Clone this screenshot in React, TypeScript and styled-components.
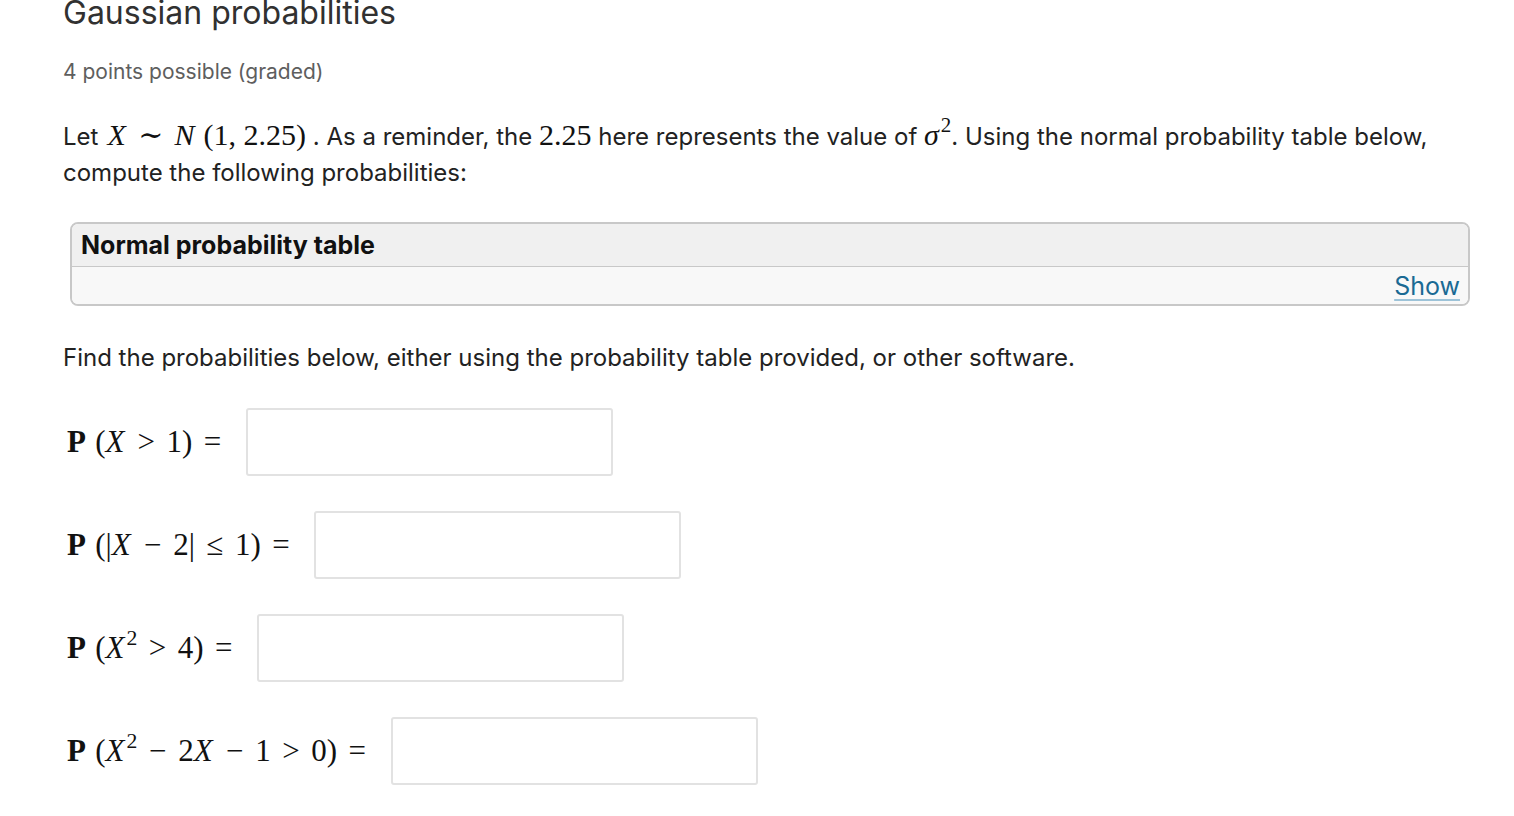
import React from 'react'
import styled, { createGlobalStyle } from 'styled-components'

const GlobalStyle = createGlobalStyle`
  html, body {
    margin: 0;
    padding: 0;
    background: #fff;
  }
  body {
    font-family: Inter, "Noto Sans", sans-serif;
    color: #313131;
  }
`

const Page = styled.div`
  padding: 0 44px 0 63px;
`

const Title = styled.h2`
  margin: -10px 0 0;
  font-size: 32px;
  font-weight: 400;
  line-height: 46px;
  color: #313131;
`

const Points = styled.div`
  margin-top: 23px;
  font-size: 21px;
  line-height: 26px;
  color: #5e5e5e;
`

const Paragraph = styled.p`
  margin: 34px 0 0;
  font-size: 24px;
  line-height: 36px;
  color: #222;
`

const Math = styled.span<{ $lead?: boolean }>`
  font-family: "Liberation Serif", "DejaVu Serif", serif;
  font-size: 1.25em;
  line-height: 1;
  color: #111;
  white-space: nowrap;
  margin-left: ${p => (p.$lead ? '0.3em' : '0')};
`

const MI = styled.i`
  font-style: italic;
  margin-right: 0.05em;
`

const Bold = styled.b`
  font-weight: 700;
  margin-right: 0.3em;
`

const Sup = styled.sup`
  font-size: 0.7em;
  line-height: 0;
  vertical-align: 0.6em;
  margin-left: 0.02em;
`

const Panel = styled.div`
  margin: 31px 0 0 7px;
  border: 2px solid #c8c8c8;
  border-radius: 8px;
  overflow: hidden;
`

const PanelHead = styled.div`
  background: #f0f0f0;
  border-bottom: 1px solid #c8c8c8;
  height: 42px;
  display: flex;
  align-items: center;
  padding: 0 9px;
  font-size: 25px;
  font-weight: 700;
  color: #111;
`

const PanelFoot = styled.div`
  background: #f8f8f8;
  height: 37px;
  display: flex;
  align-items: center;
  justify-content: flex-end;
  padding: 0 8px;
`

const ShowLink = styled.a`
  font-size: 25px;
  color: #1a6a94;
  text-decoration: underline;
  text-decoration-color: #9dc3d8;
  text-decoration-thickness: 2px;
  text-underline-offset: 4px;
  cursor: pointer;
`

const Find = styled.p`
  margin: 34px 0 0;
  font-size: 24px;
  line-height: 36px;
  color: #222;
`

const Questions = styled.div`
  margin-top: 32px;
  display: flex;
  flex-direction: column;
  gap: 35px;
  padding-left: 4px;
`

const Row = styled.div`
  display: flex;
  align-items: center;
  gap: 13px;
`

const Label = styled.span`
  font-family: "Liberation Serif", "DejaVu Serif", serif;
  font-size: 31px;
  color: #111;
  white-space: nowrap;
`

/* relations (>, =, ≤, ∼) and binary minus get their own room */
const Op = styled.span<{ $bin?: boolean }>`
  margin: 0 ${p => (p.$bin ? '0.38em' : '0.37em')};
`

const Answer = styled.input`
  width: 367px;
  height: 68px;
  box-sizing: border-box;
  border: 2px solid #e2e2e2;
  border-radius: 3px;
  background: #fff;
  font-size: 22px;
  padding: 0 12px;
  outline: none;
`

const questions: React.ReactNode[] = [
  <>
    <Bold>P</Bold>(<MI>X</MI><Op>&gt;</Op>1)<Op>=</Op>
  </>,
  <>
    <Bold>P</Bold>(|<MI>X</MI><Op $bin>−</Op>2|<Op>≤</Op>1)<Op>=</Op>
  </>,
  <>
    <Bold>P</Bold>(<MI>X</MI><Sup>2</Sup><Op>&gt;</Op>4)<Op>=</Op>
  </>,
  <>
    <Bold>P</Bold>(<MI>X</MI><Sup>2</Sup><Op $bin>−</Op>2<MI>X</MI><Op $bin>−</Op>1<Op>&gt;</Op>0)<Op>=</Op>
  </>,
]

export default function App() {
  return (
    <>
      <GlobalStyle />
      <Page>
        <Title>Gaussian probabilities</Title>
        <Points>4 points possible (graded)</Points>
        <Paragraph>
          Let<Math $lead><MI>X</MI><Op>∼</Op><MI>N</MI> (1, 2.25)</Math> . As a reminder, the <Math>2.25</Math> here
          represents the value of <Math><MI>σ</MI><Sup>2</Sup></Math>. Using the normal probability table
          below, compute the following probabilities:
        </Paragraph>
        <Panel>
          <PanelHead>Normal probability table</PanelHead>
          <PanelFoot>
            <ShowLink>Show</ShowLink>
          </PanelFoot>
        </Panel>
        <Find>
          Find the probabilities below, either using the probability table provided, or other software.
        </Find>
        <Questions>
          {questions.map((q, i) => (
            <Row key={i}>
              <Label>{q}</Label>
              <Answer type="text" />
            </Row>
          ))}
        </Questions>
      </Page>
    </>
  )
}
